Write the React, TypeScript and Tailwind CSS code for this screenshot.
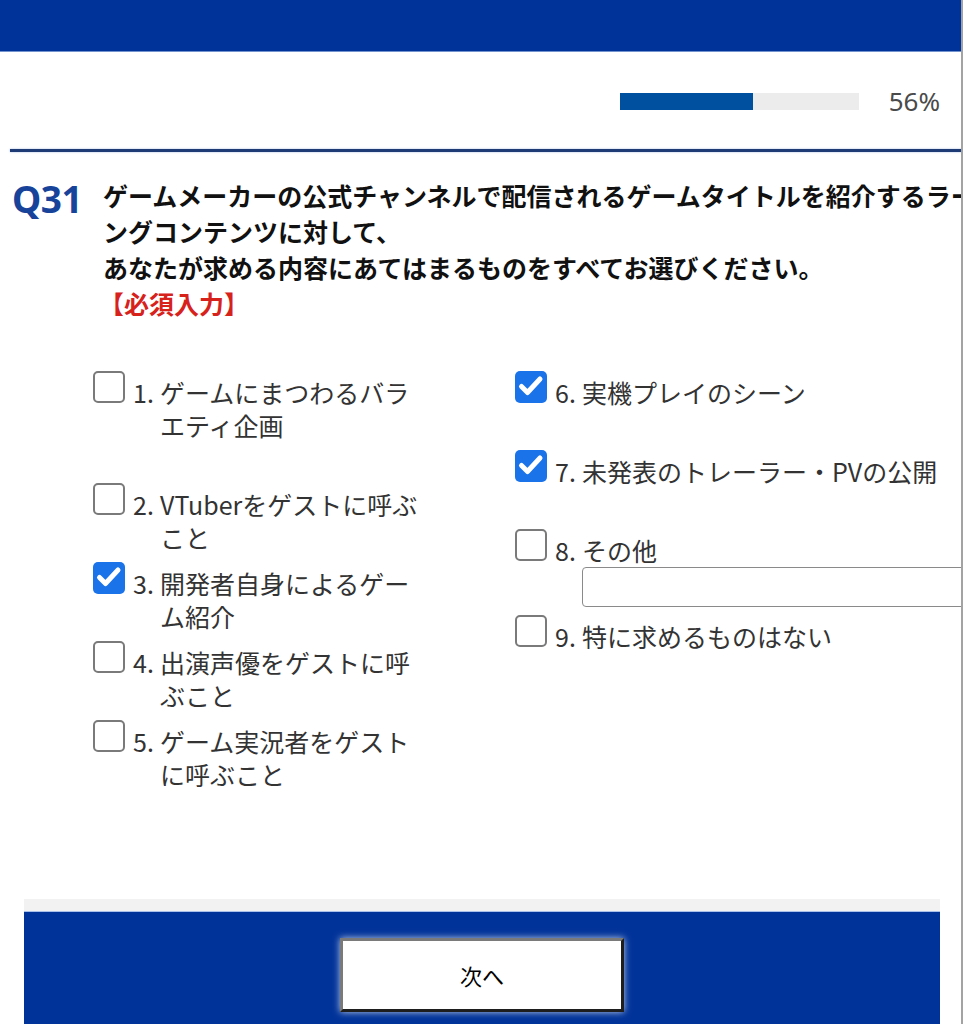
import React from 'react';

type Option = {
  no: number;
  lines: string;
  checked?: boolean;
  other?: boolean;
  extraGap?: boolean;
};

const leftOptions: Option[] = [
  { no: 1, lines: 'ゲームにまつわるバラエティ企画', extraGap: true },
  { no: 2, lines: 'VTuberをゲストに呼ぶこと' },
  { no: 3, lines: '開発者自身によるゲーム紹介', checked: true },
  { no: 4, lines: '出演声優をゲストに呼ぶこと' },
  { no: 5, lines: 'ゲーム実況者をゲストに呼ぶこと' },
];

const rightOptions: Option[] = [
  { no: 6, lines: '実機プレイのシーン', checked: true },
  { no: 7, lines: '未発表のトレーラー・PVの公開', checked: true },
  { no: 8, lines: 'その他', other: true },
  { no: 9, lines: '特に求めるものはない' },
];

function Checkbox({ checked }: { checked?: boolean }) {
  if (checked) {
    return (
      <div className="w-[32px] h-[32px] shrink-0 rounded-[5px] bg-[#1a73e8] flex items-center justify-center">
        <svg width="32" height="32" viewBox="0 0 32 32" fill="none">
          <path d="M6.5 15.5 L12.5 21.5 L25 8" stroke="white" strokeWidth="5" strokeLinecap="round" strokeLinejoin="round" />
        </svg>
      </div>
    );
  }
  return <div className="w-[32px] h-[32px] shrink-0 rounded-[5px] border-2 border-[#7a7a7a] bg-white" />;
}

function OptionRow({ opt, labelWidth }: { opt: Option; labelWidth: string }) {
  return (
    <div className={`flex items-start min-h-[71px] ${opt.extraGap ? 'mb-[33px]' : ''}`}>
      <Checkbox checked={opt.checked} />
      <div className="ml-[8px] pt-[5px] flex text-[25px] leading-[33px] text-[#333]">
        <span className="w-[27px] shrink-0">{opt.no}.</span>
        <div className={labelWidth}>
          <div>{opt.lines}</div>
          {opt.other && (
            <div className="w-[420px] h-[40px] border border-[#8a8a8a] rounded-[4px] bg-white" />
          )}
        </div>
      </div>
    </div>
  );
}

export default function App() {
  return (
    <div className="relative w-[963px] h-[1024px] overflow-hidden bg-white font-['Noto_Sans_CJK_JP','Noto_Sans',sans-serif] flex flex-col">
      <div className="h-[52px] shrink-0 bg-[#003399] border-b border-[#7393cf]" />

      <div className="mt-[41px] flex justify-end items-center pr-[23px]">
        <div className="w-[239px] h-[17px] bg-[#ececec]">
          <div className="w-[56%] h-full bg-[#0050a0]" />
        </div>
        <span className="ml-[30px] text-[26px] leading-[17px] text-[#4a4a4a] font-['Noto_Sans',sans-serif]">56%</span>
      </div>

      <div className="mt-[39px] ml-[10px] h-[3px] bg-[#1f3b76] shadow-[0_0_2px_rgba(90,130,200,0.6)]" />

      <div className="mt-[25px] flex">
        <div className="w-[103px] shrink-0 pl-[12px] pt-[4px] text-[37px] leading-[36px] font-bold tracking-[-0.5px] text-[#17439a] font-['Noto_Sans',sans-serif]">
          Q31
        </div>
        <div className="whitespace-nowrap text-[25px] leading-[36px] font-bold text-[#111]">
          <div>ゲームメーカーの公式チャンネルで配信されるゲームタイトルを紹介するラーニ</div>
          <div>ングコンテンツに対して、</div>
          <div>あなたが求める内容にあてはまるものをすべてお選びください。</div>
          <div className="text-[#d7221c] -ml-[4px]">【必須入力】</div>
        </div>
      </div>

      <div className="mt-[50px] pl-[93px] flex">
        <div className="w-[422px] shrink-0 flex flex-col gap-[8px]">
          {leftOptions.map((o) => (
            <OptionRow key={o.no} opt={o} labelWidth="w-[262px]" />
          ))}
        </div>
        <div className="flex flex-col gap-[8px]">
          {rightOptions.map((o) => (
            <OptionRow key={o.no} opt={o} labelWidth="w-[380px]" />
          ))}
        </div>
      </div>

      <div className="mt-auto mx-[24px] mr-[23px] flex flex-col h-[125px] shrink-0">
        <div className="h-[12px] bg-[#f2f2f2]" />
        <div className="flex-1 bg-[#003399] border-t border-[#a9c0e8] flex justify-center pt-[26px]">
          <button className="w-[284px] h-[74px] bg-white border-[3px] border-t-[#7a7a7a] border-l-[#7a7a7a] border-r-[#1e1e1e] border-b-[#1e1e1e] shadow-[0_0_7px_rgba(255,255,255,0.75)] text-[22px] text-black">
            次へ
          </button>
        </div>
      </div>

      <div className="absolute right-0 top-0 bottom-0 w-[2px] bg-[#a3a3a3]" />
    </div>
  );
}
